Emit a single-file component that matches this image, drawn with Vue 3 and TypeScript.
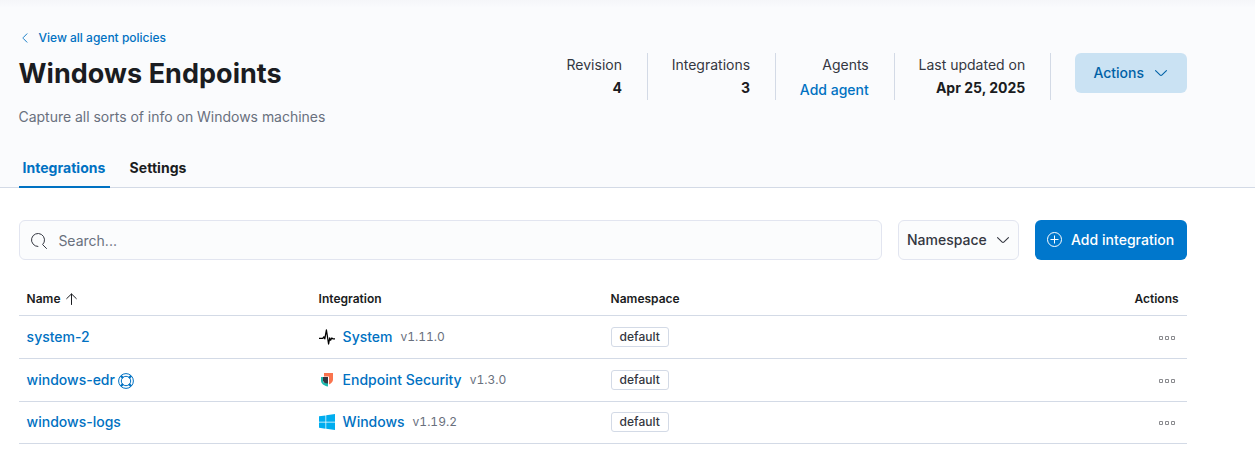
<script setup lang="ts">
interface Stat {
  label: string
  value: string
  link?: boolean
}

interface PolicyRow {
  name: string
  help?: boolean
  icon: 'system' | 'endpoint' | 'windows'
  title: string
  version: string
  namespace: string
}

const stats: Stat[] = [
  { label: 'Revision', value: '4' },
  { label: 'Integrations', value: '3' },
  { label: 'Agents', value: 'Add agent', link: true },
  { label: 'Last updated on', value: 'Apr 25, 2025' },
]

const rows: PolicyRow[] = [
  { name: 'system-2', icon: 'system', title: 'System', version: 'v1.11.0', namespace: 'default' },
  { name: 'windows-edr', help: true, icon: 'endpoint', title: 'Endpoint Security', version: 'v1.3.0', namespace: 'default' },
  { name: 'windows-logs', icon: 'windows', title: 'Windows', version: 'v1.19.2', namespace: 'default' },
]
</script>

<template>
  <div class="page">
    <header class="header">
      <div class="header-main">
        <div class="intro">
          <a class="back">
            <svg width="12" height="12" viewBox="0 0 16 16"><path d="M10.6 2.4 5.6 7.5a.8.8 0 0 0 0 1l5 5.1" fill="none" stroke="currentColor" stroke-width="1.2" stroke-linecap="round" /></svg>
            <span>View all agent policies</span>
          </a>
          <h1>Windows Endpoints</h1>
          <p>Capture all sorts of info on Windows machines</p>
        </div>
        <div class="stats">
          <dl v-for="s in stats" :key="s.label" class="stat">
            <dt>{{ s.label }}</dt>
            <dd :class="{ link: s.link }">{{ s.value }}</dd>
          </dl>
          <button class="actions-btn">
            <span>Actions</span>
            <svg width="16" height="16" viewBox="0 0 16 16"><path d="M13.069 5.157 8.384 9.768a.546.546 0 0 1-.768 0L2.93 5.158a.552.552 0 0 0-.771 0 .53.53 0 0 0 0 .759l4.684 4.61c.641.631 1.672.63 2.312 0l4.684-4.61a.53.53 0 0 0 0-.76.552.552 0 0 0-.771 0z" fill="currentColor" /></svg>
          </button>
        </div>
      </div>
      <nav class="tabs">
        <a class="tab active">Integrations</a>
        <a class="tab">Settings</a>
      </nav>
    </header>

    <main class="content">
      <div class="toolbar">
        <div class="search">
          <svg width="16" height="16" viewBox="0 0 16 16"><path d="M6.9 13.5A6.5 6.5 0 1 1 11.6 11.6L15.5 15.5" fill="none" stroke="currentColor" stroke-linecap="round" stroke-linejoin="round" /></svg>
          <span>Search...</span>
        </div>
        <button class="filter">
          <span>Namespace</span>
          <svg width="16" height="16" viewBox="0 0 16 16"><path d="M13.069 5.157 8.384 9.768a.546.546 0 0 1-.768 0L2.93 5.158a.552.552 0 0 0-.771 0 .53.53 0 0 0 0 .759l4.684 4.61c.641.631 1.672.63 2.312 0l4.684-4.61a.53.53 0 0 0 0-.76.552.552 0 0 0-.771 0z" fill="currentColor" /></svg>
        </button>
        <button class="add">
          <svg width="16" height="16" viewBox="0 0 16 16"><g fill="none" stroke="currentColor"><circle cx="7.5" cy="7.5" r="7" /><path d="M7.5 3.5v8M3.5 7.5h8" /></g></svg>
          <span>Add integration</span>
        </button>
      </div>

      <div class="table">
        <div class="row head">
          <div class="sorted">
            <span>Name</span>
            <svg width="12" height="12" viewBox="0 0 12 12"><path d="M5.5 11.5V1M.7 5.6l4.4-4.3a.6.6 0 0 1 .8 0l4.4 4.3" fill="none" stroke="currentColor" stroke-linecap="round" /></svg>
          </div>
          <div>Integration</div>
          <div>Namespace</div>
          <div class="end">Actions</div>
        </div>
        <div v-for="r in rows" :key="r.name" class="row">
          <div class="name">
            <a>{{ r.name }}</a>
            <svg v-if="r.help" width="16" height="16" viewBox="0 0 16 16">
              <g fill="none" stroke="currentColor"><circle cx="8" cy="8" r="7.4" /><circle cx="8" cy="8" r="4.7" /></g>
              <path d="m2.8 2.8 2.2 2.2M13.2 2.8 11 5M2.8 13.2 5 11M13.2 13.2 11 11" stroke="currentColor" stroke-width="2.2" />
            </svg>
          </div>
          <div class="integration">
            <svg v-if="r.icon === 'system'" width="16" height="16" viewBox="0 0 16 16">
              <path d="M0 9.3h3.8l1-1.4 1 1.9L7.4 1l2.2 14 1.1-6 .9 2.2 1.2-2.2 1 .8H16" fill="none" stroke="#000" stroke-width="1.3" stroke-linejoin="round" />
            </svg>
            <svg v-else-if="r.icon === 'endpoint'" width="16" height="16" viewBox="0 0 16 16">
              <path d="M5 1h9v6.5c0 2.2-1.4 3.8-4 5V4.5H5z" fill="#fa744e" />
              <path d="M2 5h2v5.3h5v4.3C5 13.6 2 11.5 2 8.4z" fill="#1dbab0" />
              <path d="M4 5h5v6.5C6 11.3 4.2 10.5 4 8.5z" fill="#343741" />
            </svg>
            <svg v-else width="16" height="16" viewBox="0 0 16 16">
              <path d="M0 2.3 6.5 1.4v6.3H0zM7.2 1.3 16 0v7.7H7.2zM0 8.4h6.5v6.3L0 13.8zM7.2 8.4H16V16l-8.8-1.2z" fill="#00adef" />
            </svg>
            <a>{{ r.title }}</a>
            <span class="version">{{ r.version }}</span>
          </div>
          <div class="ns"><span class="badge">{{ r.namespace }}</span></div>
          <div class="end dots">
            <svg width="16" height="4" viewBox="0 0 16 4"><path d="M.5.5h3v3h-3zM6.5.5h3v3h-3zM12.5.5h3v3h-3z" fill="none" stroke="#8a8b8f" /></svg>
          </div>
        </div>
      </div>
    </main>
  </div>
</template>

<style>
body {
  margin: 0;
  background: #fff;
}
</style>

<style scoped>
.page {
  height: 466px;
  overflow: hidden;
  font-family: Inter, "Liberation Sans", sans-serif;
  font-size: 14px;
  line-height: 20px;
  color: #343741;
}
.page * {
  box-sizing: border-box;
}
svg {
  display: block;
  flex: none;
}
button {
  font: inherit;
  border: 0;
  padding: 0;
  display: flex;
  align-items: center;
}
.header {
  height: 188px;
  border-bottom: 1px solid #d3dae6;
  background: linear-gradient(#f5f6f9, #fafbfd 8px);
  display: flex;
  flex-direction: column;
}
.header-main {
  flex: none;
  height: 148px;
  padding: 0 68px 0 18.5px;
  display: flex;
  justify-content: space-between;
}
.intro {
  padding-top: 28px;
}
.back {
  display: flex;
  align-items: center;
  gap: 8px;
  height: 20px;
  font-size: 12px;
  font-weight: 500;
  color: #0071c2;
}
h1 {
  margin: 9px 0 0;
  font-size: 27px;
  line-height: 34px;
  font-weight: 700;
  letter-spacing: 0.04px;
  color: #1a1c21;
}
p {
  margin: 16px 0 0;
  letter-spacing: -0.02px;
  color: #69707d;
}
.stats {
  display: flex;
  padding-top: 53px;
  align-items: flex-start;
}
.stat {
  margin: 0 24px 0 0;
  padding: 2px 24.75px 0 0;
  height: 47px;
  border-right: 1px solid #d3dae6;
  text-align: right;
}
dd {
  margin: 3px 0 0;
  font-weight: 700;
  color: #1a1c21;
}
dd.link {
  margin-top: 5px;
  font-weight: 500;
  color: #0071c2;
}
.actions-btn {
  width: 112px;
  height: 40px;
  justify-content: center;
  gap: 8.6px;
  border-radius: 6px;
  background: #cae2f3;
  color: #0061a6;
  font-weight: 500;
}
.tabs {
  flex: none;
  display: flex;
  gap: 16px;
  padding-left: 19px;
}
.tab {
  height: 40px;
  padding: 0 4px;
  line-height: 40px;
  font-weight: 700;
  letter-spacing: 0.06px;
  color: #1a1c21;
}
.tab.active {
  padding: 0 4.2px 0 3.5px;
  letter-spacing: 0.03px;
  color: #0071c2;
  box-shadow: inset 0 -2px #0071c2;
}
.content {
  padding: 32px 68px 0 19px;
}
.toolbar {
  display: flex;
  gap: 16px;
}
.search {
  flex: 1;
  height: 40px;
  padding: 1px 11px 0;
  display: flex;
  align-items: center;
  gap: 11.4px;
  border: 1px solid #e2e5f0;
  border-radius: 6px;
  background: #fbfcfd;
  color: #69707d;
}
.search svg {
  color: #343741;
}
.filter {
  width: 121px;
  height: 40px;
  padding: 0 7px 0 8px;
  justify-content: space-between;
  border: 1px solid #e2e5f0;
  border-radius: 6px;
  background: #fbfcfd;
  color: #343741;
  font-weight: 500;
}
.add {
  width: 152px;
  height: 40px;
  padding-left: 12px;
  gap: 8px;
  border-radius: 6px;
  background: #0077cc;
  color: #fff;
  font-weight: 500;
  letter-spacing: 0.03px;
}
.table {
  margin-top: 22px;
}
.row {
  display: grid;
  grid-template-columns: 292px 292px 1fr 120px;
  align-items: center;
  height: 43px;
  padding: 0 8.4px 0 7.6px;
  border-bottom: 1px solid #d3dae6;
}
.row:last-child {
  height: 42px;
  padding-bottom: 1px;
}
.row.head {
  height: 34px;
  font-size: 12px;
  font-weight: 600;
  color: #1a1c21;
}
.sorted,
.name,
.integration {
  display: flex;
  align-items: center;
}
.sorted {
  gap: 5.4px;
}
.name {
  gap: 3.4px;
}
.name svg {
  color: #0071c2;
  margin-top: 2px;
}
.row a {
  font-weight: 500;
  color: #0071c2;
}
.integration a {
  margin: 0 8px;
}
.version {
  font-size: 12px;
  font-variant-numeric: tabular-nums;
  color: #69707d;
}
.ns {
  display: flex;
}
.badge {
  height: 20px;
  padding: 0 8px;
  line-height: 18px;
  border: 1px solid #d3dae6;
  border-radius: 3px;
  font-size: 12px;
  font-weight: 500;
}
.end {
  text-align: right;
}
.dots {
  display: flex;
  justify-content: flex-end;
  padding: 2px 3.6px 0 0;
}
</style>
